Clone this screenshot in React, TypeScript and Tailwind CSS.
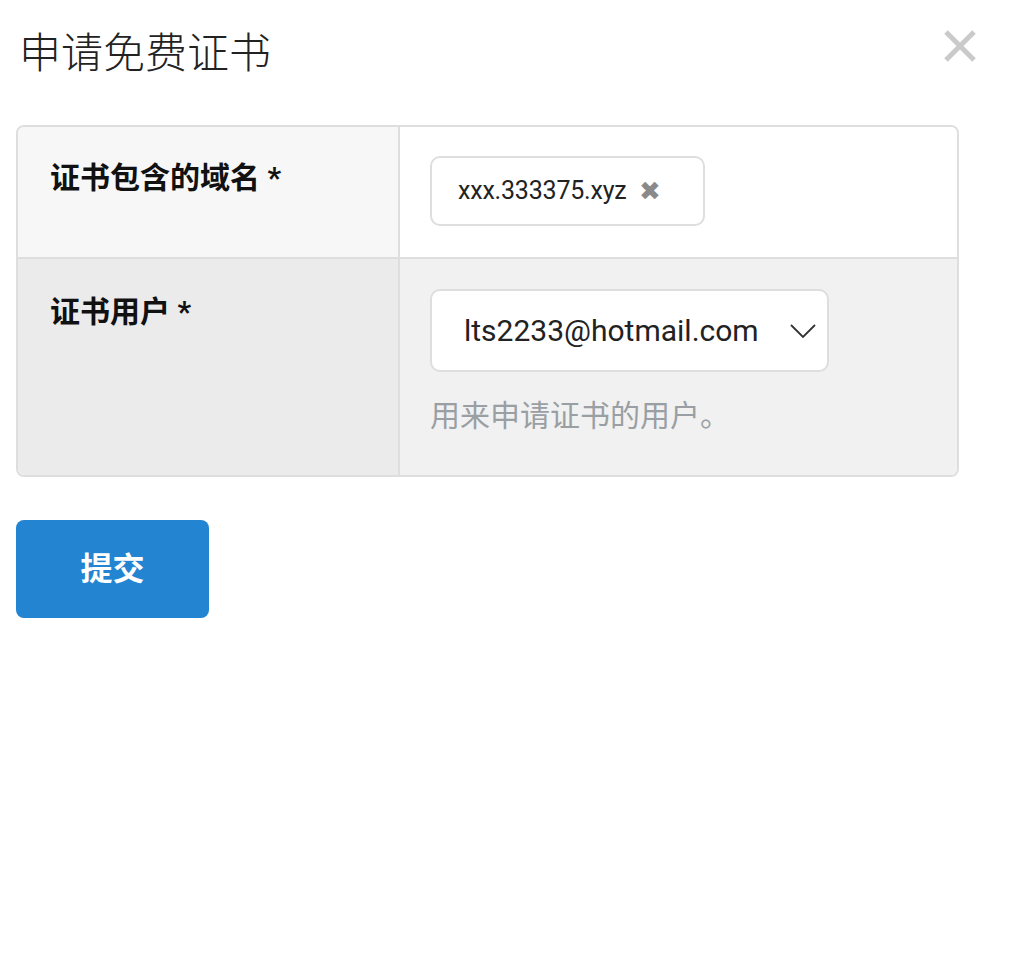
import React from "react";

const font = { fontFamily: 'Roboto, "Noto Sans CJK SC", sans-serif' };

export default function App() {
  return (
    <div className="min-h-[957px] w-[1013px] bg-white pl-4 pr-[54px] pt-[24px]" style={font}>
      <div className="flex items-start justify-between">
        <h1 className="ml-[3px] text-[42px] leading-[60px] font-light text-[#222]">申请免费证书</h1>
        <button className="mr-[-18px] mt-[5px] h-[34px] w-[34px]" aria-label="close">
          <svg viewBox="0 0 34 34" className="h-[34px] w-[34px]">
            <path d="M3 3 L31 31 M31 3 L3 31" stroke="#cacaca" strokeWidth="5" strokeLinecap="butt" />
          </svg>
        </button>
      </div>

      <div className="mt-[41px] overflow-hidden rounded-[8px] border-2 border-[#dedede]">
        <div className="grid grid-cols-[382px_1fr]">
          <div className="border-r-2 border-b-2 border-[#dedede] bg-[#f7f7f7] pl-[32px] pt-[33px] pb-[30px]">
            <span className="text-[30px] leading-[36px] font-bold text-[#111]">证书包含的域名 *</span>
          </div>
          <div className="border-b-2 border-[#dedede] bg-white pl-[30px] pt-[29px] pb-[31px]">
            <div className="inline-flex h-[70px] w-[275px] items-center rounded-[10px] border-2 border-[#dedede] pl-[26px]">
              <span className="text-[25px] tracking-[-0.2px] text-[#222]">xxx.333375.xyz</span>
              <span className="ml-[12px] text-[26px] leading-none text-[#8a8a8a]">✖</span>
            </div>
          </div>

          <div className="border-r-2 border-[#dedede] bg-[#ebebeb] pl-[32px] pt-[35px]">
            <span className="text-[30px] leading-[36px] font-bold text-[#111]">证书用户 *</span>
          </div>
          <div className="bg-[#f1f1f1] pl-[30px] pt-[30px] pb-[41px]">
            <div className="flex h-[83px] w-[399px] items-center justify-between rounded-[10px] border-2 border-[#dedede] bg-white pl-[32px] pr-[10px]">
              <span className="text-[30px] text-[#222]">lts2233@hotmail.com</span>
              <svg viewBox="0 0 28 16" className="h-[16px] w-[28px]">
                <path d="M2 2 L14 14 L26 2" fill="none" stroke="#333" strokeWidth="1.8" />
              </svg>
            </div>
            <p className="mt-[26px] text-[30px] leading-[36px] text-[#9a9fa3]">用来申请证书的用户。</p>
          </div>
        </div>
      </div>

      <button className="mt-[43px] flex h-[98px] w-[193px] items-center justify-center rounded-[8px] bg-[#2385d1] text-[32px] font-bold text-white">
        提交
      </button>
    </div>
  );
}
